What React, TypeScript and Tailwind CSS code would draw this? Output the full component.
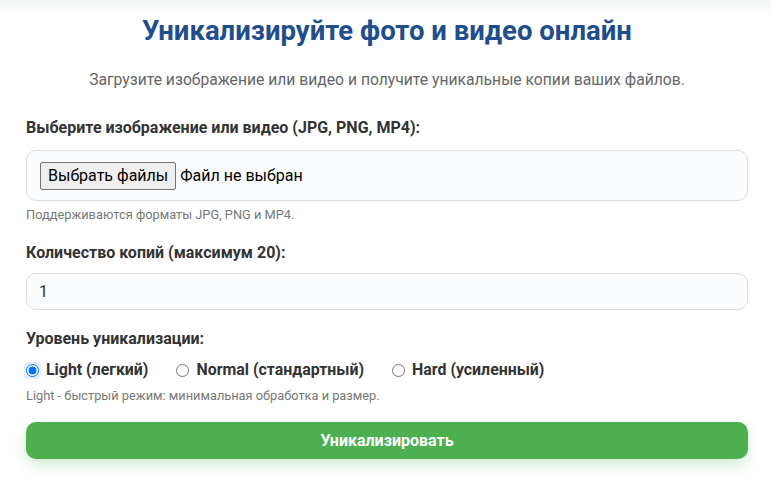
import { useState } from 'react';

const levels = [
  { id: 'light', label: 'Light (легкий)' },
  { id: 'normal', label: 'Normal (стандартный)' },
  { id: 'hard', label: 'Hard (усиленный)' },
];

export default function App() {
  const [level, setLevel] = useState('light');

  return (
    <div className="min-h-screen bg-white font-['Roboto',sans-serif] text-[#333]">
      <div className="h-4 bg-gradient-to-b from-[#f3f5f5] to-white" />
      <div className="pl-[26px] pr-[23px] pb-6">
        <h1 className="text-center text-[27.5px] font-bold leading-[28px] text-[#1f4e8c] mt-[1px]">
          Уникализируйте фото и видео онлайн
        </h1>
        <p className="text-center text-[15.7px] leading-[20px] text-[#666] mt-[25px]">
          Загрузите изображение или видео и получите уникальные копии ваших файлов.
        </p>

        <label className="block mt-[28px] text-[16px] leading-[20px] font-bold">
          Выберите изображение или видео (JPG, PNG, MP4):
        </label>
        <div className="mt-[12px] h-[51px] flex items-center gap-1 px-[13px] rounded-[10px] border border-[#ddd] bg-[#fbfcfd]">
          <span className="h-[28px] px-[7px] flex items-center border border-[#767676] bg-[#efefef] rounded-[2px] text-[16px] text-black">
            Выбрать файлы
          </span>
          <span className="text-[16px] text-black">Файл не выбран</span>
        </div>
        <p className="mt-[6px] text-[12.8px] leading-[16px] text-[#777]">Поддерживаются форматы JPG, PNG и MP4.</p>

        <label className="block mt-[20px] text-[16px] leading-[20px] font-bold">
          Количество копий (максимум 20):
        </label>
        <input
          defaultValue="1"
          className="block mt-[10px] w-full h-[37px] px-[12px] rounded-[10px] border border-[#ddd] bg-[#fbfcfd] text-[16px] text-[#333] outline-none"
        />

        <label className="block mt-[19px] text-[16px] leading-[20px] font-bold">Уровень уникализации:</label>
        <div className="mt-[11px] h-[20px] flex items-center gap-[28px]">
          {levels.map(l => (
            <label key={l.id} className="flex items-center gap-[5px] text-[15.9px] leading-[20px] font-bold cursor-pointer">
              <span className={level === l.id ? '-ml-[2px] flex p-[2px] bg-[#e3eef9] rounded-sm' : '-ml-[2px] flex p-[2px]'}>
                <input
                  type="radio"
                  name="level"
                  checked={level === l.id}
                  onChange={() => setLevel(l.id)}
                  className="m-0 w-[13px] h-[13px]"
                />
              </span>
              {l.label}
            </label>
          ))}
        </div>
        <p className="mt-[8px] text-[12.8px] leading-[16px] text-[#777]">Light - быстрый режим: минимальная обработка и размер.</p>

        <button className="block mt-[18px] w-full h-[37px] rounded-[10px] bg-[#4caf50] text-white text-[16px] font-bold shadow-[0_6px_14px_rgba(76,175,80,0.25)]">
          Уникализировать
        </button>
      </div>
    </div>
  );
}
